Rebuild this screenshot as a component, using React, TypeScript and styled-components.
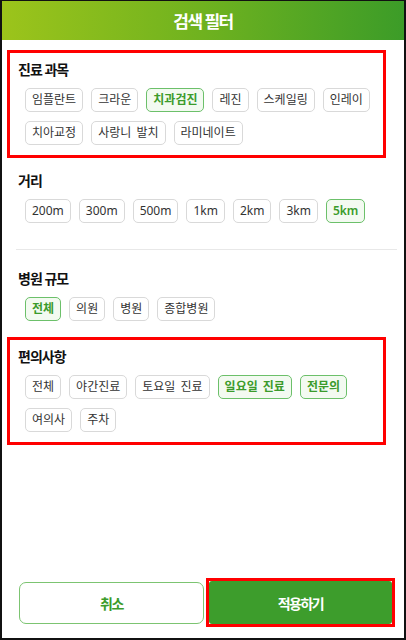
import React, { useState } from "react";
import styled, { createGlobalStyle, css } from "styled-components";

const GlobalStyle = createGlobalStyle`
  html, body {
    margin: 0;
    padding: 0;
    background: #ffffff;
  }
  * {
    box-sizing: border-box;
  }
`;

const FONT = `"Noto Sans", "Noto Sans CJK KR", sans-serif`;
const GREEN = "#3b9b2b";

const annotated = css<{ $highlight?: boolean }>`
  border: 3px solid ${(props) => (props.$highlight ? "#ff0000" : "transparent")};
`;

interface ChipGroupData {
  title: string;
  options: string[];
  selected: string[];
  highlight?: boolean;
}

const GROUPS: ChipGroupData[] = [
  {
    title: "진료 과목",
    options: ["임플란트", "크라운", "치과검진", "레진", "스케일링", "인레이", "치아교정", "사랑니 발치", "라미네이트"],
    selected: ["치과검진"],
    highlight: true,
  },
  {
    title: "거리",
    options: ["200m", "300m", "500m", "1km", "2km", "3km", "5km"],
    selected: ["5km"],
  },
  {
    title: "병원 규모",
    options: ["전체", "의원", "병원", "종합병원"],
    selected: ["전체"],
  },
  {
    title: "편의사항",
    options: ["전체", "야간진료", "토요일 진료", "일요일 진료", "전문의", "여의사", "주차"],
    selected: ["일요일 진료", "전문의"],
    highlight: true,
  },
];

const FilterSection: React.FC<{ group: ChipGroupData }> = ({ group }) => {
  const [selected, setSelected] = useState<string[]>(group.selected);

  const toggle = (option: string) => {
    setSelected((prev) =>
      prev.includes(option) ? prev.filter((o) => o !== option) : [...prev, option]
    );
  };

  return (
    <Section $highlight={group.highlight}>
      <SectionTitle>{group.title}</SectionTitle>
      <ChipList>
        {group.options.map((option) => (
          <Chip
            key={option}
            $active={selected.includes(option)}
            onClick={() => toggle(option)}
          >
            {option}
          </Chip>
        ))}
      </ChipList>
    </Section>
  );
};

const App: React.FC = () => {
  return (
    <>
      <GlobalStyle />
      <Frame>
        <Header>
          <HeaderTitle>검색 필터</HeaderTitle>
        </Header>

        <Content>
          <FilterSection group={GROUPS[0]} />
          <FilterSection group={GROUPS[1]} />
          <Divider />
          <FilterSection group={GROUPS[2]} />
          <FilterSection group={GROUPS[3]} />
        </Content>

        <Footer>
          <CancelButton>취소</CancelButton>
          <ApplyFrame $highlight>
            <ApplyButton>적용하기</ApplyButton>
          </ApplyFrame>
        </Footer>
      </Frame>
    </>
  );
};

export default App;

const Frame = styled.div`
  width: 406px;
  height: 640px;
  display: flex;
  flex-direction: column;
  background: #ffffff;
  border: 2px solid #111111;
  border-top-width: 1px;
  font-family: ${FONT};
  color: #222222;
  overflow: hidden;
`;

const Header = styled.header`
  height: 39px;
  flex-shrink: 0;
  display: flex;
  align-items: center;
  justify-content: center;
  background: linear-gradient(90deg, #9cc41b 0%, #6fb21f 50%, #3c9c28 100%);
`;

const HeaderTitle = styled.h1`
  margin: 0;
  font-size: 17px;
  font-weight: 700;
  letter-spacing: -1.5px;
  color: #ffffff;
`;

const Content = styled.main`
  flex: 1;
  display: flex;
  flex-direction: column;
  padding-top: 10px;
`;

const Section = styled.section<{ $highlight?: boolean }>`
  ${annotated};
  margin: 0 18px 3px 5px;
  padding: 8px 8px 10px 8px;
`;

const SectionTitle = styled.h2`
  margin: 0 0 9px;
  font-size: 14px;
  line-height: 18px;
  font-weight: 700;
  letter-spacing: -1px;
  color: #111111;
`;

const ChipList = styled.div`
  display: flex;
  flex-wrap: wrap;
  gap: 9px 8px;
  padding-left: 7px;
`;

const Chip = styled.button<{ $active?: boolean }>`
  height: 24px;
  padding: 0 6px;
  font-family: ${FONT};
  font-size: 12px;
  line-height: 22px;
  word-spacing: 2px;
  font-weight: ${(props) => (props.$active ? 600 : 400)};
  color: ${(props) => (props.$active ? GREEN : "#333333")};
  background: ${(props) => (props.$active ? "#f3faf1" : "#ffffff")};
  border: 1px solid ${(props) => (props.$active ? "#6cc06a" : "#d9d9d9")};
  border-radius: 5px;
  cursor: pointer;
  white-space: nowrap;
`;

const Divider = styled.hr`
  margin: 10px 7px 9px 14px;
  border: none;
  border-top: 1px solid #e8e8e8;
`;

const Footer = styled.footer`
  display: flex;
  align-items: center;
  gap: 2px;
  padding: 0 9px 11px 17px;
`;

const CancelButton = styled.button`
  flex: 0 0 185px;
  height: 42px;
  border: 1px solid #7cc471;
  border-radius: 7px;
  background: #ffffff;
  color: ${GREEN};
  font-family: ${FONT};
  font-size: 14px;
  font-weight: 700;
  letter-spacing: -1.5px;
  cursor: pointer;
`;

const ApplyFrame = styled.div<{ $highlight?: boolean }>`
  ${annotated};
  flex: 1;
  height: 49px;
  display: flex;
`;

const ApplyButton = styled.button`
  flex: 1;
  border: none;
  border-radius: 3px;
  background: #3d9d2c;
  color: #ffffff;
  font-family: ${FONT};
  font-size: 14px;
  font-weight: 700;
  letter-spacing: -1.5px;
  cursor: pointer;
`;
